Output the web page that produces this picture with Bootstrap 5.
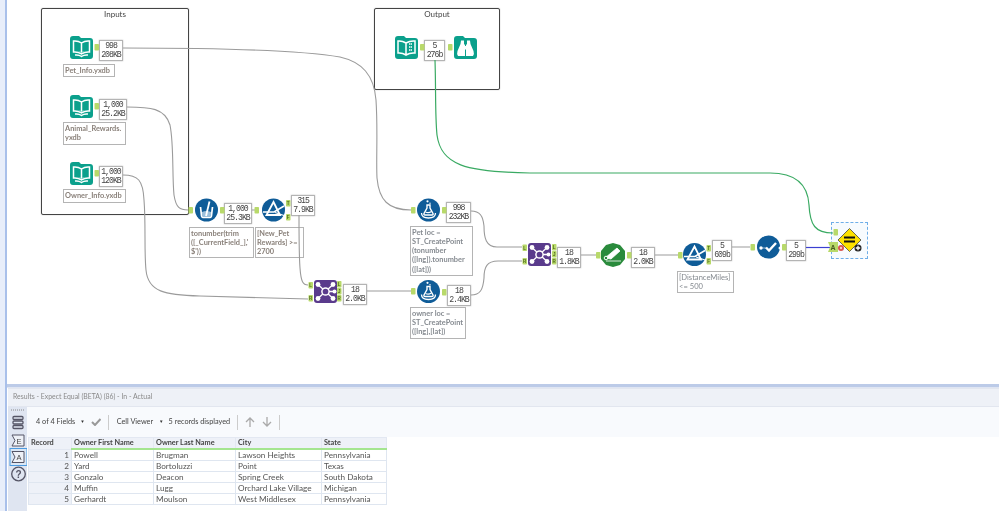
<!DOCTYPE html>
<html lang="en">
<head>
<meta charset="utf-8">
<title>Workflow results</title>
<link href="https://cdn.jsdelivr.net/npm/bootstrap@5.3.0/dist/css/bootstrap.min.css" rel="stylesheet">
<style>
html,body{width:999px;height:511px;overflow:hidden;background:#fff}
.app{width:999px;height:511px;background:linear-gradient(90deg,#e8eefa 5px,#a9c0ea 5px,#a9c0ea 7px,#fff 7px);font-family:Lato,"Liberation Sans",sans-serif;color:#555;filter:blur(.3px)}
.wf{width:999px;height:384px;flex:none}
.wires{left:0;top:0;width:999px;height:384px}
.grp{border:1px solid #444;border-radius:2px;box-shadow:0 0 1px #777;font-size:8px;line-height:10px;text-align:center;color:#444}
.g1{left:41px;top:8px;width:148px;height:207px}
.g2{left:374px;top:8px;width:126px;height:82px}
.st{border:1px solid #b4b4b4;box-shadow:0 0 1.5px #bbb;background:#fff;font-family:"Liberation Mono",monospace;font-size:8.2px;line-height:9px;letter-spacing:-1px;color:#444;text-align:center;padding-top:0;white-space:nowrap}
.lb{border:1px solid #b4b4b4;background:#fff;font-size:7.4px;line-height:9.3px;font-weight:700;color:#858a90;padding:.5px 1px;overflow:hidden;white-space:nowrap}
.lb2{color:#8a817a}
.s1{left:99px;top:40px;width:24px;height:21px}
.s2{left:99px;top:99px;width:28px;height:21px}
.s3{left:99px;top:166px;width:24px;height:21px}
.s4{left:224px;top:203px;width:28px;height:21px}
.s5{left:291px;top:195px;width:24px;height:21px}
.s6{left:343px;top:284px;width:24px;height:21px}
.s7{left:446px;top:202px;width:25px;height:21px}
.s8{left:447px;top:285px;width:24px;height:21px}
.s9{left:424px;top:40px;width:21px;height:21px}
.s10{left:557px;top:247px;width:24px;height:21px}
.s11{left:631px;top:247px;width:24px;height:21px}
.s12{left:712px;top:240px;width:20px;height:21px}
.s13{left:786px;top:240px;width:20px;height:21px}
.l1{left:63px;top:64px;width:52px;height:13px}
.l2{left:63px;top:122px;width:63px;height:23px}
.l3{left:63px;top:189px;width:63px;height:14px}
.l4{left:189px;top:227px;width:65px;height:31px}
.l5{left:255px;top:227px;width:49px;height:31px}
.l6{left:410px;top:226px;width:63px;height:50px}
.l7{left:410px;top:307px;width:56px;height:32px}
.l8{left:677px;top:271px;width:57px;height:22px;font-weight:400;font-size:7.6px}
.sel{left:831px;top:222px;width:37px;height:37px;border:1px dashed #6eaee8;background:rgba(200,225,250,.15)}
.res{margin-left:7px;flex:1;min-height:0}
.divi{height:4px;background:#bccbe8;border-bottom:1px solid #dfe5f2}
.rhead{height:19px;background:#eef1f7;border-bottom:1px solid #e2e6ef;border-top:1px solid #e2e6ef;font-size:6.9px;line-height:15px;padding-left:5px;color:#8a8a8a;margin-left:1px}
.rail{width:19px;margin-left:1px;background:#dfe5f1;flex:none}
.tbar{height:30px;background:#f8fafd;font-size:7.3px;color:#444;padding-left:9px;flex:none}
.sp{width:1px;height:15px;background:#ccc}
.car{font-size:4.5px;color:#333;line-height:1}
.m1{margin-left:5px}.m2{margin-left:7px}.m3{margin-left:8px}.m5{margin-left:6px}
.dtb{width:358px;table-layout:fixed;margin:0 0 0 1px;font-size:8.2px;color:#555;border-collapse:collapse}
.dtb th{background:#eef1f8;font-size:7.3px;font-weight:700;color:#444;height:11px;padding:0 2px;line-height:10px;border:1px solid #e3e8f2;border-bottom:2px solid #a4e58f}
.dtb th:first-child{border-bottom:1px solid #e3e8f2}
.dtb td{height:11px;padding:0 2px;line-height:10px;border:1px solid #dfe6f0;white-space:nowrap;overflow:hidden}
.dtb td:first-child{background:#eef1f8;text-align:right}
.c0{width:43px}.c1{width:82px}.c2{width:82px}.c3{width:86px}.c4{width:65px}
</style>
</head>
<body class="m-0">
<div class="app d-flex flex-column">
  <div class="wf position-relative">
    <div class="grp g1 position-absolute">Inputs</div>
    <div class="grp g2 position-absolute">Output</div>

    <div class="st s1 position-absolute">998<br>208KB</div>
    <div class="st s2 position-absolute">1,000<br>25.2KB</div>
    <div class="st s3 position-absolute">1,000<br>120KB</div>
    <div class="st s4 position-absolute">1,000<br>25.3KB</div>
    <div class="st s5 position-absolute">315<br>7.9KB</div>
    <div class="st s6 position-absolute">18<br>2.0KB</div>
    <div class="st s7 position-absolute">998<br>232KB</div>
    <div class="st s8 position-absolute">18<br>2.4KB</div>
    <div class="st s9 position-absolute">5<br>276b</div>
    <div class="st s10 position-absolute">18<br>1.8KB</div>
    <div class="st s11 position-absolute">18<br>2.0KB</div>
    <div class="st s12 position-absolute">5<br>609b</div>
    <div class="st s13 position-absolute">5<br>299b</div>

    <div class="lb lb2 l1 position-absolute">Pet_Info.yxdb</div>
    <div class="lb lb2 l2 position-absolute">Animal_Rewards.<br>yxdb</div>
    <div class="lb lb2 l3 position-absolute">Owner_Info.yxdb</div>
    <div class="lb lb2 l4 position-absolute">tonumber(trim<br>([_CurrentField_],'<br>$'))</div>
    <div class="lb lb2 l5 position-absolute">[New_Pet<br>Rewards] &gt;=<br>2700</div>
    <div class="lb l6 position-absolute">Pet loc =<br>ST_CreatePoint<br>(tonumber<br>([lng]).tonumber<br>([lat]))</div>
    <div class="lb l7 position-absolute">owner loc =<br>ST_CreatePoint<br>([lng],[lat])</div>
    <div class="lb l8 position-absolute">[DistanceMiles]<br>&lt;= 500</div>
    <div class="sel position-absolute"></div>

    <svg class="wires position-absolute" viewBox="0 0 999 384" xmlns="http://www.w3.org/2000/svg" font-family="Liberation Sans, sans-serif">
      <defs>
        <g id="folder"><path d="M0 3Q0 0 3 0H9L11 2H20Q23 2 23 5V20Q23 23 20 23H3Q0 23 0 20Z" fill="#0ba08c"/></g>
        <g id="book"><use href="#folder"/><path d="M11.500 7Q8 4.500 3.500 5V16Q8 15.500 11.500 18Q15 15.500 19.500 16V5Q15 4.500 11.500 7ZM11.500 7V18M5 19Q9 18.500 11.500 20.500Q14 18.500 18 19" fill="none" stroke="#fff" stroke-width="1.500"/><path d="M9.500 15L11.500 17L13.500 15" fill="none" stroke="#8fd8cc" stroke-width="1"/></g>
        <g id="join"><rect width="23" height="23" rx="3" fill="#5a3b8c"/><g stroke="#fff" stroke-width="1.300"><path d="M11.500 11.500L4.500 5M11.500 11.500L4.500 18M11.500 11.500L18.500 5M11.500 11.500L18.500 18M11.500 11.500H20"/></g><g fill="#fff"><circle cx="4" cy="4.500" r="2.400"/><circle cx="4" cy="18.500" r="2.400"/><circle cx="19" cy="4.500" r="2.400"/><circle cx="19" cy="18.500" r="2.400"/><circle cx="20.500" cy="11.500" r="2"/></g><circle cx="11.500" cy="11.500" r="3.600" fill="#5a3b8c" stroke="#fff" stroke-width="1.500"/></g>
        <g id="filter"><circle cx="11.500" cy="11.500" r="11.500" fill="#0f5c98"/><path d="M11.500 3.500L18 16.500H4.500Z" fill="none" stroke="#fff" stroke-width="1.800"/><path d="M1 13.500H12L22 7.500" fill="none" stroke="#fff" stroke-width="1.500"/><path d="M13 14L22 17" fill="none" stroke="#fff" stroke-width="1.200"/></g>
        <g id="flask"><circle cx="11.500" cy="11.500" r="11.500" fill="#0f5c98"/><path d="M10 6.500H13V9.500L16 15Q16.500 16.500 15 16.500H8Q6.500 16.500 7 15L10 9.500Z" fill="none" stroke="#fff" stroke-width="1.400"/><circle cx="10.500" cy="2.800" r="1.100" fill="#fff"/><circle cx="13" cy="4.800" r=".7" fill="#fff"/><path d="M8.500 13.500Q11.500 15 14.500 13" fill="none" stroke="#fff" stroke-width="1.200"/><path d="M4.500 14.500Q4.500 19.500 11.500 19.500Q18.500 19.500 18.500 14.500" fill="none" stroke="#fff" stroke-width="1.300"/></g>
        <g id="cup"><circle cx="11.500" cy="11.500" r="11.500" fill="#0f5c98"/><path d="M5.500 8.500L6.500 17Q6.800 19 9 19H14Q16.200 19 16.500 17L17.500 8.500" fill="none" stroke="#fff" stroke-width="1.700"/><path d="M7 13.500Q11.500 11.500 16 13.500V17Q16 18.500 14 18.500H9Q7 18.500 7 17Z" fill="#9cc0dc"/><path d="M11 17.500L14.500 3" fill="none" stroke="#fff" stroke-width="1.800"/></g>
        <g id="pt"><rect width="4.500" height="6.500" rx=".8" fill="#b8d96a"/></g>
      </defs>

      <g fill="none" stroke="#9b9b9b" stroke-width="1.100">
        <path d="M123 48C230 48 300 50 340 57C362 62 374 75 376 100C378 130 376 160 377 178C379 200 388 210 411 210"/>
        <path d="M127 107C150 107 165 108 170 125C174 145 172 175 174 195C176 208 180 210 188 210"/>
        <path d="M123 175C138 175 143 180 144 200C146 225 144 250 146 270C148 292 165 295 200 296L308 299"/>
        <path d="M299 215C299 240 299 255 300 268C301 282 303 285 308 285"/>
        <path d="M252 210H255M367 291H411M471 211C480 211 483 216 484 226C484 238 486 247 497 247H522M471 295C480 295 483 290 484 278C484 267 487 261 498 261H522M581 255H596M655 255H678M732 247H750"/>
      </g>
      <path d="M435 60C436 90 435 115 437 135C441 165 465 172 530 173H770C800 173 808 188 809 205C810 225 815 233 833 233" fill="none" stroke="#3aaa63" stroke-width="1.200"/>
      <path d="M806 247.500H830" stroke="#3b3fd1" stroke-width="1.200"/>

      <use href="#book" x="70" y="36"/><use href="#pt" x="94.500" y="44"/>
      <use href="#book" x="70" y="95"/><use href="#pt" x="94.500" y="103"/>
      <use href="#book" x="70" y="162"/><use href="#pt" x="94.500" y="170"/>

      <g>
        <use href="#folder" x="395" y="36"/>
        <path d="M406 43Q402 40.500 398 41V53Q402 52.500 406 55Q410 52.500 415 53V41Q410 40.500 406 43ZM406 43V55" fill="none" stroke="#fff" stroke-width="1.500"/>
        <path d="M409 44h3M409 47h3M409 50h3" stroke="#fff" stroke-width="1.400" stroke-dasharray="1.500 .5"/>
        <use href="#pt" x="420" y="44"/><use href="#pt" x="448" y="44"/>
        <use href="#folder" x="454" y="36"/>
        <path d="M458 56Q456.500 54 457.500 51L460.500 44L461 40.500H464V44.500H465V56ZM473 56Q474.500 54 473.500 51L470.500 44L470 40.500H467V44.500H466V56Z" fill="#fff"/>
        <rect x="464" y="46" width="3" height="3.500" fill="#fff"/>
      </g>

      <use href="#pt" x="188.500" y="207"/><use href="#cup" x="195" y="198.500"/><use href="#pt" x="220" y="207"/>
      <use href="#pt" x="254.500" y="207"/><use href="#filter" x="262" y="198.500"/>
      <use href="#pt" x="286" y="200"/><use href="#pt" x="286" y="214"/>

      <use href="#pt" x="308.500" y="282"/><use href="#pt" x="308.500" y="295"/><use href="#join" x="314" y="280"/>
      <use href="#pt" x="337" y="281"/><use href="#pt" x="337" y="288"/><use href="#pt" x="337" y="295"/>

      <use href="#pt" x="411" y="207"/><use href="#flask" x="417" y="198.500"/><use href="#pt" x="442" y="207"/>
      <use href="#pt" x="411" y="288"/><use href="#flask" x="417" y="280"/><use href="#pt" x="442" y="289"/>

      <use href="#pt" x="522.500" y="244.500"/><use href="#pt" x="522.500" y="258"/><use href="#join" x="528" y="243"/>
      <use href="#pt" x="552" y="244"/><use href="#pt" x="552" y="251"/><use href="#pt" x="552" y="258"/>

      <use href="#pt" x="596" y="252"/>
      <path d="M613 243L620 245L625 251L625 259L620 265L613 267L606 265L601 259L601 251L606 245Z" fill="#2a8b3c"/>
      <path d="M605 258L617 248L620 251L611 259ZM606 261H621" fill="#fff" stroke="#fff" stroke-width=".8"/>
      <circle cx="606" cy="258" r="1.800" fill="#2a8b3c" stroke="#fff" stroke-width="1"/>
      <use href="#pt" x="627" y="252"/>

      <use href="#pt" x="678" y="252"/><use href="#filter" x="683" y="243"/>
      <use href="#pt" x="706.500" y="245"/><use href="#pt" x="706.500" y="258"/>

      <g font-size="4.500" font-weight="700" fill="#4f6a1c" text-anchor="middle">
        <text x="288.200" y="205.200">T</text><text x="288.200" y="219.200">F</text>
        <text x="310.700" y="287.200">L</text><text x="310.700" y="300.200">R</text>
        <text x="339.200" y="286.200">L</text><text x="339.200" y="293.200">J</text><text x="339.200" y="300.200">R</text>
        <text x="524.700" y="249.700">L</text><text x="524.700" y="263.200">R</text>
        <text x="554.200" y="249.200">L</text><text x="554.200" y="256.200">J</text><text x="554.200" y="263.200">R</text>
        <text x="708.700" y="250.200">T</text><text x="708.700" y="263.200">F</text>
      </g>

      <use href="#pt" x="750.500" y="244"/>
      <circle cx="768.500" cy="247" r="11.500" fill="#0f5c98"/>
      <path d="M766 247.500L769 250.500L776 243" fill="none" stroke="#fff" stroke-width="2.400"/>
      <circle cx="761" cy="248" r="1.700" fill="#fff"/><circle cx="780" cy="248" r="1.500" fill="#fff"/><path d="M761 248H766" stroke="#fff" stroke-width=".6"/>
      <use href="#pt" x="782" y="244"/>

      <use href="#pt" x="833.500" y="229"/>
      <path d="M828 242H838V252H828L830 247Z" fill="#b8d96a"/>
      <text x="833" y="250" font-size="7" font-weight="700" fill="#4a5a20" text-anchor="middle">A</text>
      <path d="M849.500 228.500L861 240L849.500 251.500L838 240Z" fill="#fde100" stroke="#444" stroke-width=".8"/>
      <path d="M844 237.500h11M844 241.500h11" stroke="#111" stroke-width="2"/>
      <circle cx="841" cy="248" r="3" fill="#d9534f"/><circle cx="841" cy="248" r="1.200" fill="#f5c9c7"/>
      <circle cx="858" cy="248" r="3.500" fill="#222"/><path d="M855.800 248h4.400M858 245.800v4.400" stroke="#fff" stroke-width="1.300"/>
    </svg>
  </div>

  <div class="res d-flex flex-column">
    <div class="divi"></div>
    <div class="rhead">Results - Expect Equal (BETA) (86) - In - Actual</div>
    <div class="d-flex flex-grow-1">
      <div class="rail">
        <svg width="19" height="80" viewBox="0 0 19 80" xmlns="http://www.w3.org/2000/svg" font-family="Liberation Sans, sans-serif">
          <path d="M3 3H16" stroke="#888" stroke-width="1" stroke-dasharray="1 1"/>
          <g fill="none" stroke="#556" stroke-width="1.300"><rect x="5" y="9.500" width="10" height="3" rx="1"/><rect x="5" y="14" width="10" height="3" rx="1"/><rect x="5" y="18.500" width="10" height="3" rx="1"/></g>
          <path d="M4 28H16V39H4L7 33.500Z" fill="#eef1f7" stroke="#556" stroke-width="1"/>
          <text x="11" y="37" font-size="7.500" fill="#444" text-anchor="middle">E</text>
          <rect x="2" y="41.500" width="17" height="17" fill="#dbe7f5" stroke="#4d9be0"/>
          <path d="M4 44.500H16V55.500H4L7 50Z" fill="#eef1f7" stroke="#556" stroke-width="1"/>
          <text x="11" y="53" font-size="7.500" fill="#444" text-anchor="middle">A</text>
          <circle cx="10.500" cy="67" r="6.800" fill="none" stroke="#556" stroke-width="1.300"/>
          <text x="10.500" y="70.500" font-size="10" font-weight="700" fill="#556" text-anchor="middle">?</text>
        </svg>
      </div>
      <div class="flex-grow-1">
        <div class="tbar d-flex align-items-center">
          <span>4 of 4 Fields</span><span class="car m1">&#9660;</span>
          <svg class="m5" width="10" height="8" viewBox="0 0 10 8" xmlns="http://www.w3.org/2000/svg"><path d="M1 4L4 7L9.500 1" fill="none" stroke="#999" stroke-width="2"/></svg>
          <span class="sp m2"></span>
          <span class="m3">Cell Viewer</span><span class="car m5">&#9660;</span>
          <span class="m1">5 records displayed</span>
          <span class="sp m2"></span>
          <svg class="m2" width="10" height="10" viewBox="0 0 10 10" xmlns="http://www.w3.org/2000/svg"><path d="M5 10V1M1 5L5 1L9 5" fill="none" stroke="#aaa" stroke-width="1.300"/></svg>
          <svg class="m2" width="10" height="10" viewBox="0 0 10 10" xmlns="http://www.w3.org/2000/svg"><path d="M5 0V9M1 5L5 9L9 5" fill="none" stroke="#aaa" stroke-width="1.300"/></svg>
          <span class="sp m2"></span>
        </div>
        <table class="dtb">
          <colgroup><col class="c0"><col class="c1"><col class="c2"><col class="c3"><col class="c4"></colgroup>
          <thead><tr><th>Record</th><th>Owner First Name</th><th>Owner Last Name</th><th>City</th><th>State</th></tr></thead>
          <tbody>
            <tr><td>1</td><td>Powell</td><td>Brugman</td><td>Lawson Heights</td><td>Pennsylvania</td></tr>
            <tr><td>2</td><td>Yard</td><td>Bortoluzzi</td><td>Point</td><td>Texas</td></tr>
            <tr><td>3</td><td>Gonzalo</td><td>Deacon</td><td>Spring Creek</td><td>South Dakota</td></tr>
            <tr><td>4</td><td>Muffin</td><td>Lugg</td><td>Orchard Lake Village</td><td>Michigan</td></tr>
            <tr><td>5</td><td>Gerhardt</td><td>Moulson</td><td>West Middlesex</td><td>Pennsylvania</td></tr>
          </tbody>
        </table>
      </div>
    </div>
  </div>
</div>
<script src="https://cdn.jsdelivr.net/npm/bootstrap@5.3.0/dist/js/bootstrap.bundle.min.js"></script>
</body>
</html>
